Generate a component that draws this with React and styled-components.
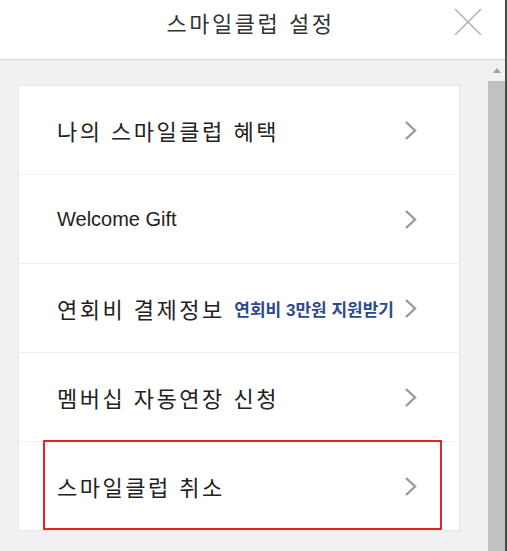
import React from 'react';
import styled, { createGlobalStyle } from 'styled-components';

const GlobalStyle = createGlobalStyle`
    html, body {
        margin: 0;
        padding: 0;
        background: #f1f1f1;
    }
    body {
        font-family: 'Liberation Sans', 'Noto Sans CJK KR', sans-serif;
        color: #222;
    }
`;

const menus = [
    { label: '나의 스마일클럽 혜택' },
    { label: 'Welcome Gift', latin: true },
    { label: '연회비 결제정보', badge: '연회비 3만원 지원받기' },
    { label: '멤버십 자동연장 신청' },
    { label: '스마일클럽 취소', highlight: true },
];

const Chevron = () => (
    <ChevronIcon viewBox="0 0 13 21" width="13" height="21">
        <polyline points="2,2 11,10.5 2,19" fill="none" stroke="#9a9a9a" strokeWidth="2.4" />
    </ChevronIcon>
);

const App = () => {
    return (
        <>
            <GlobalStyle />
            <Window>
                <Main>
                    <Header>
                        <Title>스마일클럽 설정</Title>
                        <CloseButton aria-label="닫기">
                            <svg viewBox="0 0 28 28" width="28" height="28">
                                <path d="M1 1 L27 27 M27 1 L1 27" stroke="#b4b4b4" strokeWidth="1.6" />
                            </svg>
                        </CloseButton>
                    </Header>
                    <Body>
                        <Content>
                            <Card>
                                {menus.map((menu) => (
                                    <Row key={menu.label}>
                                        <Label latin={menu.latin}>{menu.label}</Label>
                                        <Right>
                                            {menu.badge && <Badge>{menu.badge}</Badge>}
                                            <Chevron />
                                        </Right>
                                        {menu.highlight && <Highlight />}
                                    </Row>
                                ))}
                            </Card>
                        </Content>
                        <Scrollbar>
                            <ArrowUp />
                            <Thumb />
                        </Scrollbar>
                    </Body>
                </Main>
                <Edge />
            </Window>
        </>
    );
};

export default App;

const Window = styled.div`
    display: flex;
    width: 507px;
    height: 551px;
    overflow: hidden;
`;

const Main = styled.div`
    flex: 1;
    display: flex;
    flex-direction: column;
    min-width: 0;
`;

const Edge = styled.div`
    width: 2px;
    background: #4a4a4a;
`;

const Header = styled.div`
    position: relative;
    height: 60px;
    flex-shrink: 0;
    display: flex;
    justify-content: center;
    padding-top: 8px;
    box-sizing: border-box;
    background: #fff;
    border-bottom: 1px solid #d6d6d6;
`;

const Title = styled.h1`
    margin: 0 0 0 -4px;
    font-size: 22px;
    font-weight: 400;
    line-height: 34px;
    letter-spacing: 2.5px;
    color: #333;
`;

const CloseButton = styled.button`
    position: absolute;
    top: 8px;
    right: 23px;
    padding: 0;
    border: 0;
    background: none;
    display: flex;
`;

const Body = styled.div`
    flex: 1;
    display: flex;
    min-height: 0;
`;

const Content = styled.div`
    flex: 1;
    padding: 25px 28px 0 18px;
`;

const Card = styled.div`
    background: #fff;
    border: 1px solid #e6e6e6;
`;

const Row = styled.div`
    position: relative;
    height: 88px;
    display: flex;
    align-items: center;
    justify-content: space-between;
    padding: 0 42px 0 38px;
    & + & {
        border-top: 1px solid #eeeeee;
    }
`;

const Label = styled.span`
    font-size: ${(props) => (props.latin ? '20px' : '22px')};
    letter-spacing: ${(props) => (props.latin ? '0' : '2.5px')};
    color: #222;
`;

const Right = styled.div`
    display: flex;
    align-items: center;
    gap: 10px;
`;

const Badge = styled.span`
    font-size: 17px;
    font-weight: 700;
    color: #2b4a8e;
`;

const ChevronIcon = styled.svg`
    display: block;
`;

const Highlight = styled.div`
    position: absolute;
    left: 24px;
    right: 17px;
    top: -2px;
    bottom: 0;
    border: 2px solid #e8212b;
    pointer-events: none;
`;

const Scrollbar = styled.div`
    width: 17px;
    flex-shrink: 0;
    display: flex;
    flex-direction: column;
    align-items: center;
    background: #f1f1f1;
`;

const ArrowUp = styled.div`
    margin-top: 8px;
    width: 0;
    height: 0;
    border-left: 4.5px solid transparent;
    border-right: 4.5px solid transparent;
    border-bottom: 5px solid #a3a3a3;
`;

const Thumb = styled.div`
    margin-top: 8px;
    width: 17px;
    flex: 1;
    background: #c1c1c1;
`;
